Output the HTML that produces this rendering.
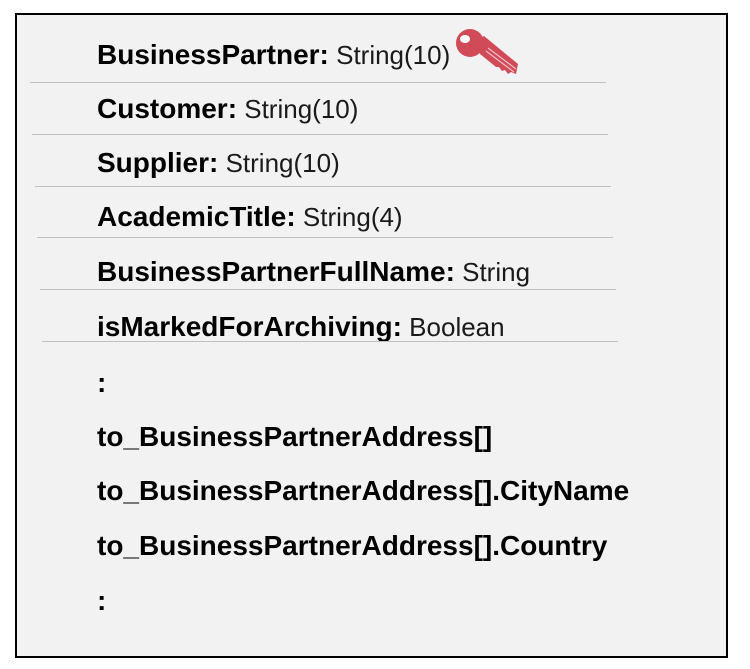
<!DOCTYPE html>
<html><head><meta charset="utf-8"><style>
html,body{margin:0;padding:0;width:750px;height:669px;background:#fff;overflow:hidden}
.box{position:absolute;left:15px;top:13px;width:709px;height:641px;border:2px solid #000;background:#f2f2f2}
.t{position:absolute;left:97px;font-family:"Liberation Sans",sans-serif;font-size:26px;line-height:24px;color:#1a1a1a;white-space:nowrap}
.t b{font-weight:bold;color:#000;font-size:28px}
.l{position:absolute;height:1px;background:#c0c0c0}
</style></head><body>
<div class="box"></div>
<div class="t" style="top:43px"><b>BusinessPartner:</b> String(10)</div>
<div class="l" style="left:30px;top:82px;width:576px"></div>
<div class="t" style="top:97px"><b>Customer:</b> String(10)</div>
<div class="l" style="left:32px;top:134px;width:576px"></div>
<div class="t" style="top:151px"><b>Supplier:</b> String(10)</div>
<div class="l" style="left:35px;top:186px;width:576px"></div>
<div class="t" style="top:205px"><b>AcademicTitle:</b> String(4)</div>
<div class="l" style="left:37px;top:237px;width:576px"></div>
<div class="t" style="top:260px"><b>BusinessPartnerFullName:</b> String</div>
<div class="l" style="left:40px;top:289px;width:576px"></div>
<div class="t" style="top:315px"><b>isMarkedForArchiving:</b> Boolean</div>
<div class="l" style="left:42px;top:341px;width:576px"></div>
<div class="t" style="top:371px"><b>:</b></div>
<div class="t" style="top:425px"><b>to_BusinessPartnerAddress[]</b></div>
<div class="t" style="top:479px"><b>to_BusinessPartnerAddress[].CityName</b></div>
<div class="t" style="top:534px"><b>to_BusinessPartnerAddress[].Country</b></div>
<div class="t" style="top:589px"><b>:</b></div>
<svg style="position:absolute;left:454px;top:28px" width="66" height="48" viewBox="0 0 66 48">
<g fill="#d04a57">
<circle cx="16" cy="15" r="14"/>
<path d="M22 12 L30 8 L64 36 L62 46 L57 44 L54 46 L51 42 L48 43 L45 39 L42 39 L26 26 Z"/>
</g>
<ellipse cx="11" cy="11" rx="5" ry="4" fill="#fff"/>
<path d="M34 20 L62 41 M32 23 L60 44" stroke="#f3c0c5" stroke-width="1.2"/>
</svg>
</body></html>
